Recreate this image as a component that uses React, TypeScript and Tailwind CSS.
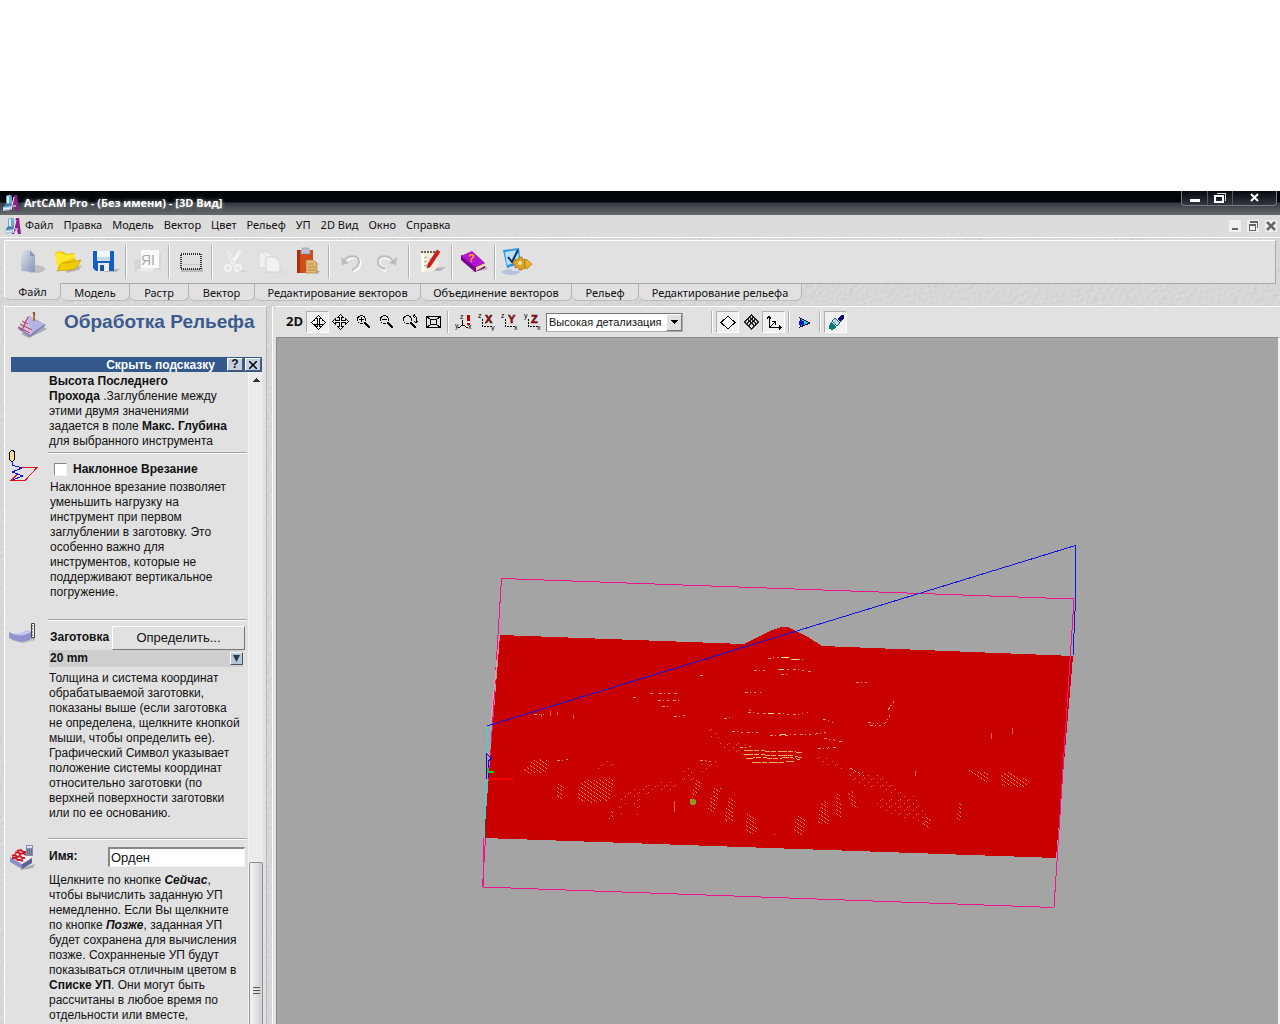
import React, { useState } from "react";

type IconProps = { children: React.ReactNode; w?: number; h?: number; crisp?: boolean };

function Pic({ children, w = 32, h = 32, crisp = false }: IconProps) {
    return (
        <svg width={w} height={h} viewBox={`0 0 ${w} ${h}`} fill="none" className="block shrink-0" shapeRendering={crisp ? "crispEdges" : "auto"} aria-hidden="true">
            {children}
        </svg>
    );
}

// ArtCAM logo
function Logo() {
    return (
        <Pic w={16} h={16}>
            <path d="M1 11l3-4h5l2 6H1z" fill="#3f7fae" />
            <rect x="3" y="0" width="6" height="9" rx="2" fill="#6fa6cf" />
            <rect x="4" y="1" width="2" height="7" fill="#d6eef8" />
            <path d="M0 12l9-1v4l-9 1z" fill="#a9c8df" />
            <path d="M0 14l8-1" stroke="#e8f3fa" />
            <path d="M11 0h3l2 16h-3l-1-4h-2l-1 4H7z" fill="#8d1f8b" />
            <path d="M11 2l-3 13M10 11h3" stroke="#fff" />
        </Pic>
    );
}

// ---------- main toolbar icons ----------
const icons = {
    newFile: (
        <Pic>
            <ellipse cx="20" cy="23" rx="10" ry="4" fill="#a9a9a9" opacity=".6" />
            <path d="M6 4h9l5 5v17l-14-1z" fill="url(#paper)" />
            <path d="M15 4l5 6h-5z" fill="#8d9ab5" />
            <defs>
                <linearGradient id="paper" x1="0" y1="0" x2="1" y2="1">
                    <stop offset="0" stopColor="#dfe5f0" />
                    <stop offset="1" stopColor="#8494b4" />
                </linearGradient>
            </defs>
        </Pic>
    ),
    open: (
        <Pic>
            <path d="M14 25l16-6-3 5-12 3z" fill="#999" opacity=".6" />
            <path d="M3 7l4-2 5 1 2 2 8-1 2 9-18 9z" fill="#e8c500" />
            <path d="M3 8l5-2 5 3 9-1 1 4-14 5-3 8z" fill="#ffe92b" />
            <path d="M5 25c3-2 1-7 6-8 6 0 11-2 18-3-3 4-2 7-7 9-6 2-13 1-17 2z" fill="#f0cc00" stroke="#b58e00" strokeWidth=".6" />
        </Pic>
    ),
    save: (
        <Pic>
            <path d="M18 23h13l-4 3H15z" fill="#999" opacity=".6" />
            <path d="M4 5h21v20H7l-3-3z" fill="#145dc2" />
            <rect x="8" y="5" width="13" height="10" fill="#f4f7fb" />
            <path d="M8 11h13v4H8z" fill="#cbd8e7" />
            <rect x="9" y="17" width="11" height="8" fill="#e8eef4" />
            <rect x="11" y="19" width="4" height="6" fill="#1a4e9b" />
        </Pic>
    ),
    text: (
        <Pic>
            <path d="M3 26l-1-11 3-2 5 1 2-7h17v17H12z" fill="#d6d6d6" />
            <rect x="9" y="4" width="18" height="18" fill="#fafafa" />
            <text x="9" y="19" fontSize="14" fill="#aaa" fontFamily="Liberation Sans">ЯI</text>
            <path d="M3 25l7-3h13l-4 4z" fill="#ececec" />
        </Pic>
    ),
    rect: (
        <Pic crisp>
            <rect x="6" y="22" width="22" height="4" fill="#bbb" />
            <rect x="6" y="8" width="20" height="15" fill="#e0e0e0" stroke="#333" strokeWidth="2" strokeDasharray="1 1" />
            <path d="M8 18h17" stroke="#c7c7c7" />
        </Pic>
    ),
    cut: (
        <Pic>
            <path d="M10 5l6 13M22 5l-8 13" stroke="#f5f5f5" strokeWidth="3" />
            <path d="M10 5l6 13" stroke="#d6d6d6" />
            <circle cx="10" cy="22" r="3" stroke="#f4f4f4" strokeWidth="2" />
            <circle cx="20" cy="22" r="3" stroke="#f4f4f4" strokeWidth="2" />
            <path d="M21 25h7" stroke="#cfcfcf" />
        </Pic>
    ),
    copy: (
        <Pic>
            <path d="M4 6h9l4 4v12H4z" fill="#eee" stroke="#d8d8d8" />
            <path d="M11 11h9l5 4v11H11z" fill="#f1f1f1" stroke="#d3d3d3" />
            <path d="M26 26h3" stroke="#c9c9c9" />
        </Pic>
    ),
    paste: (
        <Pic>
            <path d="M5 4h16v23H5z" fill="#d34a1b" />
            <path d="M5 4h3v23H5z" fill="#a9300d" />
            <path d="M9 5l2-3h5l2 3v3H9z" fill="#b9c4d4" stroke="#7c889b" strokeWidth=".6" />
            <path d="M14 14h7l4 3v10H14z" fill="#e3b877" stroke="#a8783a" strokeWidth=".7" />
            <path d="M16 18h6M16 21h8M16 24h8" stroke="#b88745" />
            <path d="M25 25h3l-3 3z" fill="#999" />
        </Pic>
    ),
    undo: (
        <Pic>
            <path d="M10 16c5-7 15-6 15 1 0 4-3 7-7 8" stroke="#fbfbfb" strokeWidth="3" />
            <path d="M9 15c5-7 15-6 15 1 0 4-3 6-7 8" stroke="#bcbcbc" strokeWidth="2" />
            <path d="M6 11l1 8 7-2z" fill="#bcbcbc" />
        </Pic>
    ),
    redo: (
        <Pic>
            <path d="M21 16c-5-7-14-6-14 1 0 4 3 6 7 8" stroke="#fbfbfb" strokeWidth="3" />
            <path d="M21 15c-5-7-15-6-15 1 0 4 3 6 7 7" stroke="#bcbcbc" strokeWidth="2" />
            <path d="M25 11l-1 8-7-2z" fill="#bcbcbc" />
        </Pic>
    ),
    notes: (
        <Pic>
            <path d="M18 22l13-1-6 4H16z" fill="#888" opacity=".5" />
            <path d="M6 7h16l1 13-4 5-13 1z" fill="#f3eedc" />
            <path d="M6 7h3l2 17-4 2z" fill="#fffdf2" />
            <path d="M6 6h16" stroke="#665" strokeWidth="2" strokeDasharray="2 1" />
            <path d="M9 12l3-1M9 16l3-1M9 20l3-1M14 13h4" stroke="#a98" />
            <path d="M22 4l3 2-10 15-3 1 1-4z" fill="#d81818" stroke="#8d0e0e" strokeWidth=".5" />
        </Pic>
    ),
    book: (
        <Pic>
            <path d="M13 26l15-2 2-2-4-3z" fill="#999" opacity=".5" />
            <path d="M3 9v5l14 12 10-4v-5z" fill="#7a0090" />
            <path d="M18 21l9-4v3l-9 5z" fill="#e9d5a0" />
            <path d="M3 10l11-5 13 12-10 4z" fill="#b316cf" />
            <text x="10" y="16" fontSize="11" fontWeight="bold" fill="#ffb300" fontFamily="Liberation Sans">?</text>
        </Pic>
    ),
    gear: (
        <Pic>
            <ellipse cx="10" cy="26" rx="9" ry="3" fill="#b9c3df" />
            <path d="M2 4l16-2 2 18-14 2z" fill="#2b93e5" />
            <path d="M4 6l13-2 1 12-12 3z" fill="#b7e1fb" />
            <path d="M7 11l4 5 6-12" stroke="#10305c" strokeWidth="2" />
            <path d="M8 21l4 4 5 0-1-6z" fill="#d9def0" />
            <path d="M14 13l3 1 1-3h3l1 3 2-1v10l-2-1-1 2h-3l-1-3-3 1v-3l-2-1v-2l2-1z" fill="#dba320" stroke="#9c6b08" strokeWidth=".6" />
            <circle cx="19" cy="17" r="2" fill="#f5e2b0" />
            <path d="M25 13l6 5-5 5-2-2v-6z" fill="#e8b12c" stroke="#9c6b08" strokeWidth=".6" />
        </Pic>
    ),
};

const toolGroups: { label: string; icon: React.ReactNode }[][] = [
    [
        { label: "Новый", icon: icons.newFile },
        { label: "Открыть", icon: icons.open },
        { label: "Сохранить", icon: icons.save },
    ],
    [{ label: "Примечания", icon: icons.text }],
    [{ label: "Размер", icon: icons.rect }],
    [
        { label: "Вырезать", icon: icons.cut },
        { label: "Копировать", icon: icons.copy },
        { label: "Вставить", icon: icons.paste },
    ],
    [
        { label: "Отменить", icon: icons.undo },
        { label: "Повторить", icon: icons.redo },
    ],
    [{ label: "Заметки", icon: icons.notes }],
    [{ label: "Справка", icon: icons.book }],
    [{ label: "Настройка", icon: icons.gear }],
];

const menus = ["Файл", "Правка", "Модель", "Вектор", "Цвет", "Рельеф", "УП", "2D Вид", "Окно", "Справка"];

const tabs = [
    { name: "Файл", width: "w-[57px]" },
    { name: "Модель", width: "w-[69px]" },
    { name: "Растр", width: "w-[59px]" },
    { name: "Вектор", width: "w-[66px]" },
    { name: "Редактирование векторов", width: "w-[166px]" },
    { name: "Объединение векторов", width: "w-[151px]" },
    { name: "Рельеф", width: "w-[67px]" },
    { name: "Редактирование рельефа", width: "w-[163px]" },
];

function Separator() {
    return <span className="mx-[2px] w-[2px] self-stretch border-l border-r border-l-[#b0b0b0] border-r-white" />;
}

// Grainy grey surface behind the panels
function Texture() {
    return (
        <svg className="absolute inset-0 h-full w-full" aria-hidden="true">
            <filter id="grain">
                <feTurbulence type="fractalNoise" baseFrequency="0.25" numOctaves="2" seed="4" />
                <feDiffuseLighting lightingColor="#dcdcdc" surfaceScale="0.6">
                    <feDistantLight azimuth="225" elevation="72" />
                </feDiffuseLighting>
            </filter>
            <rect width="100%" height="100%" filter="url(#grain)" />
        </svg>
    );
}

function TitleBar() {
    return (
        <header className="flex h-6 items-center justify-between bg-linear-to-b from-[#000509] from-45% via-[#343a40] via-50% to-[#666b70] pl-[3px] pr-[3px]">
            <div className="flex items-center gap-[5px]">
                <Logo />
                <h1 className="whitespace-nowrap font-['Open_Sans','Noto_Sans',sans-serif] text-[11px] font-bold text-white [text-shadow:0_0_4px_#aaa]">
                    ArtCAM Pro - (Без имени) - [3D Вид]
                </h1>
            </div>
            <div className="flex h-[15px] self-start rounded-b-[4px] border border-t-0 border-[#777d86] bg-linear-to-b from-[#050a10] to-[#33383e]">
                <button aria-label="Свернуть" className="grid w-[26px] place-items-center border-r border-[#555b63]">
                    <Pic w={12} h={12} crisp><rect x="1" y="7" width="10" height="3" fill="#fff" /></Pic>
                </button>
                <button aria-label="Развернуть" className="grid w-[25px] place-items-center border-r border-[#555b63]">
                    <Pic w={12} h={12} crisp>
                        <path d="M3 1.500h8.500v7" stroke="#ddd" />
                        <rect x="1" y="4" width="8" height="6" stroke="#fff" strokeWidth="2" />
                    </Pic>
                </button>
                <button aria-label="Закрыть" className="grid w-[43px] place-items-center">
                    <Pic w={12} h={12}><path d="M2 2l7 7M9 2L2 9" stroke="#fff" strokeWidth="2" /></Pic>
                </button>
            </div>
        </header>
    );
}

function MenuBar() {
    return (
        <nav className="flex h-[23px] items-center border-b border-white bg-[#dcdcdc] pb-px pl-[5px] pr-[3px]">
            <Logo />
            <ul className="ml-1 flex grow gap-[10px]">
                {menus.map((m) => (
                    <li key={m}><button className="block whitespace-nowrap">{m}</button></li>
                ))}
            </ul>
            <div className="flex gap-[6px]">
                <button aria-label="Свернуть документ" className="grid size-3 place-items-center bg-[#efefef]">
                    <Pic w={12} h={12} crisp><rect x="3" y="8" width="6" height="2" fill="#666" /></Pic>
                </button>
                <button aria-label="Восстановить документ" className="grid size-3 place-items-center bg-[#efefef]">
                    <Pic w={12} h={12} crisp>
                        <path d="M3.500 2h7v6M2.500 5h6v5h-6z" stroke="#666" strokeWidth="1" />
                        <path d="M3 2h8M2 5h7" stroke="#666" strokeWidth="2" />
                    </Pic>
                </button>
                <button aria-label="Закрыть документ" className="grid size-3 place-items-center bg-[#efefef]">
                    <Pic w={12} h={12}><path d="M2 2l8 8M10 2l-8 8" stroke="#666" strokeWidth="2.500" /></Pic>
                </button>
            </div>
        </nav>
    );
}

function Ribbon() {
    const [active, setActive] = useState("Файл");
    return (
        <section className="relative px-1 pt-[2px] pb-[5px]">
            <div className="flex h-[44px] border border-t-white border-l-white border-r-[#a8a8a8] border-b-[#a8a8a8] bg-[#e1e1e1] py-1 pl-[7px]">
                {toolGroups.map((group, i) => (
                    <React.Fragment key={i}>
                        {i > 0 && <Separator />}
                        {group.map((t) => (
                            <button key={t.label} title={t.label} className="grid w-[37px] place-items-center">{t.icon}</button>
                        ))}
                    </React.Fragment>
                ))}
            </div>
            <div className="flex" role="tablist">
                {tabs.map((t) => (
                    <button
                        key={t.name}
                        role="tab"
                        aria-selected={active === t.name}
                        onClick={() => setActive(t.name)}
                        className={`${t.width} h-[17px] whitespace-nowrap rounded-b-[6px] border-r border-b border-r-[#b4b4b4] border-b-[#bcbcbc] bg-[#e1e1e1] leading-[17px] ${active === t.name ? "relative -mt-px border-l border-l-white" : ""}`}
                    >
                        {t.name}
                    </button>
                ))}
            </div>
        </section>
    );
}

// ---------- left panel ----------
const Rule = () => <hr className="border-0 border-t border-b border-t-[#a4a4a4] border-b-white" />;

function Assistant() {
    const [ramp, setRamp] = useState(false);
    const [name, setName] = useState("Орден");
    return (
        <aside className="relative flex w-[263px] shrink-0 flex-col border-t border-r border-l border-t-white border-r-[#b9b5bd] border-l-white bg-[#e1e1e1] font-['Liberation_Sans',Arial,sans-serif] text-[12px] leading-[15px] text-[#111]">
            <div className="flex h-[50px] shrink-0 items-start pt-[3px] pl-[10px]">
                <Pic w={34} h={30}>
                    <path d="M6 24l8 4 18-9-6-4z" fill="#aaa" />
                    <path d="M3 19l11-13 17 9-16 12z" fill="#7f82b8" />
                    <path d="M3 17l11-10 6 1-4 9 4 3-5 5z" fill="#d3c3de" />
                    <path d="M13 9c5-2 8 2 17 5l-13 9c1-5-4-6-4-14z" fill="#b3b6e2" />
                    <path d="M3 17l12 6M5 14l12 6M7 11l6 3M13 7L7 20" stroke="#b5305f" />
                    <path d="M19 2v9" stroke="#a5733c" strokeWidth="2" />
                    <path d="M18 2l2 3" stroke="#5e3f1e" />
                </Pic>
                <h2 className="ml-[15px] whitespace-nowrap text-[19px] leading-6 font-bold text-[#3b5a8d]">Обработка Рельефа</h2>
            </div>
            <div className="mr-1 ml-[6px] flex h-[15px] shrink-0 items-center justify-end gap-[2px] bg-[#33588c] pr-[1px] font-bold">
                <button className="mr-[10px] pt-px text-white">Скрыть подсказку</button>
                <button aria-label="Помощь" className="h-[13px] w-4 border border-t-white border-l-white border-r-[#556] border-b-[#556] bg-[#c2cfe2] leading-[11px]">?</button>
                <button aria-label="Закрыть панель" className="grid h-[13px] w-4 place-items-center border border-t-white border-l-white border-r-[#556] border-b-[#556] bg-[#c2cfe2]">
                    <Pic w={8} h={8}><path d="M0 0l8 8M8 0L0 8" stroke="#000" strokeWidth="1.500" /></Pic>
                </button>
            </div>
            <div className="flex min-h-0 grow overflow-hidden">
                <div className="w-[242px] whitespace-nowrap">
                    <div className="mt-[2px] pl-[44px]">
                        <p>
                            <b>Высота Последнего<br />Прохода</b> .Заглубление между<br />
                            этими двумя значениями<br />
                            задается в поле <b>Макс. Глубина</b><br />
                            для выбранного инструмента
                        </p>
                    </div>
                    <div className="flex">
                        <div className="w-[43px] pl-[3px]">
                            <Pic w={34} h={36} crisp>
                                <path d="M1.500 3.500l2-2h2l1 2v7l-2 2h-1l-2-2z" fill="#f0e090" stroke="#000" />
                                <path d="M4 13v3l10 3-10 4 11 4-11 4" stroke="#1616d8" />
                                <path d="M14 18.500h15L17 31.500H3l6-6" stroke="#e01020" />
                            </Pic>
                        </div>
                        <div className="grow pt-[3px]">
                            <Rule />
                            <label className="flex h-[26px] items-center gap-[6px] pt-1 pl-[6px] font-bold">
                                <input
                                    type="checkbox"
                                    checked={ramp}
                                    onChange={(e) => setRamp(e.target.checked)}
                                    className="size-[13px] appearance-none border border-t-[#888] border-l-[#888] border-r-[#f4f4f4] border-b-[#f4f4f4] bg-white checked:bg-[#33588c]"
                                />
                                Наклонное Врезание
                            </label>
                            <p className="pl-[2px]">
                                Наклонное врезание позволяет<br />
                                уменьшить нагрузку на<br />
                                инструмент при первом<br />
                                заглублении в заготовку. Это<br />
                                особенно важно для<br />
                                инструментов, которые не<br />
                                поддерживают вертикальное<br />
                                погружение.
                            </p>
                        </div>
                    </div>
                    <div className="mt-[19px] flex">
                        <div className="w-[43px] pt-[3px] pl-[3px]">
                            <Pic w={30} h={24}>
                                <path d="M3 18l12 3 12-3v-3H5z" fill="#aaa" opacity=".7" />
                                <path d="M1 10c7 4 12 2 18-1l5 1v6c-5 4-12 5-18 2l-5-2z" fill="#8e92cf" />
                                <path d="M1 10c7 3 12 1 18-2l4 2c-6 4-15 5-22 0z" fill="#c3c6ee" />
                                <path d="M23.500 1.500h3v14h-3z" fill="#f5f5f5" stroke="#444" />
                                <path d="M23 4h2M23 7h2M23 10h2M23 13h2" stroke="#333" />
                            </Pic>
                        </div>
                        <div className="grow">
                            <Rule />
                            <div className="flex h-[29px] items-center justify-between pt-1 pl-[2px] pr-[2px]">
                                <span className="font-bold">Заготовка</span>
                                <button className="h-6 w-[133px] border border-t-white border-l-white border-r-[#777] border-b-[#777] bg-[#e1e1e1] text-[13px]">Определить...</button>
                            </div>
                            <div className="mr-1 ml-px flex h-[17px] items-center justify-between bg-[#cfcfcf] pl-px font-bold">
                                20 mm
                                <button aria-label="Показать размеры" className="grid size-[13px] place-items-center border border-t-white border-l-white border-r-[#456] border-b-[#456] bg-[#b9c7d8]">
                                    <Pic w={9} h={9}><path d="M1 1h7L4.500 8z" fill="#24384f" /></Pic>
                                </button>
                            </div>
                            <p className="pt-1 pl-px">
                                Толщина и система координат<br />
                                обрабатываемой заготовки,<br />
                                показаны выше (если заготовка<br />
                                не определена, щелкните кнопкой<br />
                                мыши, чтобы определить ее).<br />
                                Графический Символ указывает<br />
                                положение системы координат<br />
                                относительно заготовки (по<br />
                                верхней поверхности заготовки<br />
                                или по ее основанию.
                            </p>
                        </div>
                    </div>
                    <div className="mt-[17px] flex">
                        <div className="w-[43px] pt-[5px] pl-[3px]">
                            <Pic w={30} h={28}>
                                <path d="M12 26l15-5-2 4-12 2z" fill="#999" opacity=".7" />
                                <path d="M2 14l12 7 10-6v5l-10 6z" fill="#5d618f" />
                                <path d="M2 14l12 7v5L2 19z" fill="#8a90ca" />
                                <path d="M2 14l12-8 10 8-10 7z" fill="#f1eef2" />
                                <path d="M4 13l3-1 2 2 3-1 2 2 3 0M7 10l3-1 2 2 3-1 3 2M9 8l4-1 2 2 3 0M4 15l3 0 3 2 3 0 2 1" stroke="#d0182b" strokeWidth="2" />
                                <path d="M18 2h7v11h-7z" fill="#8490ac" />
                                <path d="M19 3h5v2h-5z" fill="#dfe6f2" />
                                <path d="M19 7h5M19 9h5M19 11h5" stroke="#44506b" strokeDasharray="1 1" />
                            </Pic>
                        </div>
                        <div className="grow">
                            <Rule />
                            <div className="flex h-[33px] items-center justify-between pl-px pr-[2px]">
                                <label htmlFor="tp-name" className="font-bold">Имя:</label>
                                <input
                                    id="tp-name"
                                    value={name}
                                    onChange={(e) => setName(e.target.value)}
                                    className="h-5 w-[137px] border-t-2 border-r border-b border-l-2 border-t-[#888] border-r-[#f2f2f2] border-b-[#f2f2f2] border-l-[#888] bg-white px-px text-[13px]"
                                />
                            </div>
                            <p className="pl-px">
                                Щелкните по кнопке <b><i>Сейчас</i></b>,<br />
                                чтобы вычислить заданную УП<br />
                                немедленно. Если Вы щелкните<br />
                                по кнопке <b><i>Позже</i></b>, заданная УП<br />
                                будет сохранена для вычисления<br />
                                позже. Сохранненые УП будут<br />
                                показываться отличным цветом в<br />
                                <b>Списке УП</b>. Они могут быть<br />
                                рассчитаны в любое время по<br />
                                отдельности или вместе,
                            </p>
                        </div>
                    </div>
                </div>
                {/* scroll bar */}
                <div className="ml-px flex w-[15px] flex-col border-l border-[#f6f6f6] bg-[#ececec]">
                    <button aria-label="Прокрутить вверх" className="grid h-4 place-items-center">
                        <Pic w={7} h={4} crisp><path d="M0 4l3-4 4 4z" fill="#333" /></Pic>
                    </button>
                    <div className="mt-auto grid h-[162px] place-items-center rounded-t-[2px] border border-b-0 border-[#8f9097] bg-linear-to-r from-[#f4f4f4] to-[#cfcfd3] pt-[95px]">
                        <Pic w={7} h={10} crisp><path d="M0 1h7M0 4h7M0 7h7M0 10h7" stroke="#555" /></Pic>
                    </div>
                </div>
            </div>
        </aside>
    );
}

// ---------- 3D view toolbar ----------
const lens = <><circle cx="6.500" cy="6.500" r="4" stroke="#000" /><path d="M10 10l5 5" stroke="#000" strokeWidth="2" /></>;
const axes = <path d="M4.500 6v7.500H14" stroke="#000" strokeDasharray="2 1" />;

// Axis names around the small coordinate cross, the view direction in red
function AxisIcon({ top, right, dir }: { top: string; right: string; dir: string }) {
    return (
        <>
            {axes}
            <text x="0" y="5" fontSize="7" fill="#000" fontFamily="Liberation Sans">{top}</text>
            <text x="13" y="17" fontSize="7" fill="#000" fontFamily="Liberation Sans">{right}</text>
            <text x="7" y="10" fontSize="11" fontWeight="bold" fill="#c01020" stroke="#300" strokeWidth=".5" fontFamily="Liberation Sans">{dir}</text>
        </>
    );
}

const viewIcons = {
    spin: (
        <>
            <path d="M9.500 2.500l3 3h-2v8h2l-3 3-3-3h2v-8h-2z" stroke="#000" fill="#fff" />
            <path d="M6 6.500L2.500 9.500 6 12.500V11h7v1.500l3.500-3L13 6.500" stroke="#000" />
        </>
    ),
    pan: <path d="M8.500 1.500l3 3h-2v3h4v-2l3 3-3 3v-2h-4v4h2l-3 3-3-3h2v-4h-4v2l-3-3 3-3v2h4v-3h-2z" stroke="#000" fill="#eee" />,
    zoomIn: <>{lens}<path d="M4 6.500h5M6.500 4v5" stroke="#000" /></>,
    zoomOut: <>{lens}<path d="M4 6.500h5" stroke="#000" /></>,
    zoomPrev: <>{lens}<path d="M12 2.500c4 0 4 4 3 7M14 1l-2 2 2 2M13 8l2 2 2-2" stroke="#000" /></>,
    fit: <path d="M2.500 3.500h14v11h-14zM6.500 6.500h6v5h-6zM3 4l3 2M16 4l-3 2M3 14l3-2M16 14l-3-2" stroke="#000" />,
    iso: (
        <>
            <path d="M7.500 7v5M8 12l-5 3M8 12l5 3" stroke="#000" />
            <text x="5" y="6" fontSize="7" fill="#000" fontFamily="Liberation Sans">z</text>
            <text x="0" y="15" fontSize="7" fill="#000" fontFamily="Liberation Sans">y</text>
            <text x="13" y="16" fontSize="7" fill="#000" fontFamily="Liberation Sans">x</text>
            <path d="M13 2v6M13 10v2" stroke="#b00" strokeWidth="3" />
        </>
    ),
    alongX: <AxisIcon top="z" right="y" dir="X" />,
    alongY: <AxisIcon top="z" right="x" dir="Y" />,
    alongZ: <AxisIcon top="y" right="x" dir="Z" />,
    plane: <path d="M9 3l7 6.500L9 16 2 9.500z" stroke="#000" fill="#fff" />,
    mesh: <path d="M9.500 2l7 7-7 7-7-7zM7.500 4l7 7M5.500 6l7 7M11.500 4l-7 7M13.500 6l-7 7" stroke="#222" />,
    origin: <path d="M4.500 3v11.500H16M2 5.500l2-2 2 2M14 12.500l2 2-2 2M5 14l5-5M7 8.500h3v3" stroke="#000" />,
    light: <><path d="M4 5l10 5-10 4 2-4z" fill="#16d8e8" stroke="#113" /><rect x="3" y="8" width="5" height="4" fill="#1018c8" /></>,
    brush: <><path d="M11 6l3-4h3v4l-4 3z" fill="#101080" /><path d="M8 5l5 5-3 3-5-5z" fill="#b5dde0" stroke="#267" /><path d="M4 9l6 5c-2 3-5 3-8 2 0-3 0-5 2-7z" fill="#0b7a72" /></>,
};

function ViewButton({ label, icon, pressed = false }: { label: string; icon: React.ReactNode; pressed?: boolean }) {
    return (
        <button
            title={label}
            aria-pressed={pressed}
            className={`grid h-[22px] w-[23px] place-items-center border ${pressed ? "border-t-[#b0b0b0] border-l-[#b0b0b0] border-r-white border-b-white bg-[#f0f0f0]" : "border-transparent"}`}
        >
            <Pic w={18} h={18} crisp>{icon}</Pic>
        </button>
    );
}

function ViewToolbar() {
    return (
        <div className="flex h-[31px] items-center border-t border-white pl-[7px]">
            <button className="w-[23px] text-center font-['Open_Sans','Noto_Sans',sans-serif] text-[13px] font-bold">2D</button>
            <ViewButton label="Вращать" icon={viewIcons.spin} pressed />
            <ViewButton label="Сдвиг" icon={viewIcons.pan} />
            <ViewButton label="Увеличить" icon={viewIcons.zoomIn} />
            <ViewButton label="Уменьшить" icon={viewIcons.zoomOut} />
            <ViewButton label="Предыдущий вид" icon={viewIcons.zoomPrev} />
            <ViewButton label="Показать все" icon={viewIcons.fit} />
            <div className="flex h-[22px] px-px"><Separator /></div>
            <ViewButton label="Изометрия" icon={viewIcons.iso} />
            <ViewButton label="Вид по X" icon={viewIcons.alongX} />
            <ViewButton label="Вид по Y" icon={viewIcons.alongY} />
            <ViewButton label="Вид по Z" icon={viewIcons.alongZ} />
            <div className="relative ml-[2px]">
                <select
                    aria-label="Детализация"
                    className="block h-[19px] w-[137px] appearance-none border border-t-[#777] border-l-[#777] border-r-[#aaa] border-b-[#aaa] bg-white pl-[2px] font-['Liberation_Sans',Arial,sans-serif] text-[11px]"
                >
                    <option>Высокая детализация</option>
                    <option>Низкая детализация</option>
                </select>
                <span className="pointer-events-none absolute top-px right-px grid h-[17px] w-4 place-items-center border border-t-white border-l-white border-r-[#777] border-b-[#777] bg-[#e1e1e1]">
                    <Pic w={8} h={4} crisp><path d="M0 0h8L4 4z" fill="#000" /></Pic>
                </span>
            </div>
            <div className="ml-[25px] flex h-[22px] px-px"><Separator /></div>
            <ViewButton label="Плоскость" icon={viewIcons.plane} pressed />
            <ViewButton label="Сетка" icon={viewIcons.mesh} />
            <ViewButton label="Начало координат" icon={viewIcons.origin} pressed />
            <div className="flex h-[22px] px-px"><Separator /></div>
            <ViewButton label="Свет" icon={viewIcons.light} />
            <div className="flex h-[22px] px-px"><Separator /></div>
            <ViewButton label="Материал" icon={viewIcons.brush} pressed />
        </div>
    );
}

// Areas where the toolpath shows through as a dotted grain
const denseAreas = [
    "M522 771l12-12 14 1 2 5-5 8-20 1z",
    "M577 800l4-19 28-3 4 2-2 20-20 3z",
    "M555 797l3-14 6 2-2 14z",
    "M707 811l8-24 6 1-6 24z",
    "M724 820l4-22 7 2-2 22z",
    "M745 832l2-18 9 4 1 13-6 4z",
    "M691 798l5-18 7 1-7 16z",
    "M794 833l2-17 10 2-3 18z",
    "M818 824l2-22 8-1 1 23z",
    "M837 818l-2-18 4-9 3 25z",
    "M850 805l-2-15 5 2 5 16z",
    "M968 770l20 2 2 11-9-3z",
    "M1001 773l9-1 19 9-1 6-26-1z",
    "M957 821l1-17 4-2-1 18z",
    "M922 826l5-10 4 4-1 9z",
    "M609 820l1-10 4 1-1 8z",
];

const looseAreas = [
    "M595 766l10-8 10 2-2 6-17 3z",
    "M616 795l38-13 24-3-2 10-39 7-17 4z",
    "M619 802l8-5-3 19-4 2zM634 798l7-1-2 21-4-8z",
    "M680 778l8-12 7 12-10 6z",
    "M702 760l16 3-6 7-12 7z",
    "M848 768l40 10 18 20-26-8-32-9z",
    "M872 800l34-4 20 14 1 12-23-4-16-5-14-8z",
    "M895 800l20-4 12 28-12-8z",
    "M704 728l8-1 8 10-6 3zM718 743l30-2-4 14-20-6z",
    "M808 755l32 6 4 10-4 1z",
    "M773 838l1-10 3 1-1 13z",
];

const contours = [
    "M768 659l6-2 12 0 8 3 10-1",
    "M754 670h14M778 669h12l12 1 10 2",
    "M781 674h6M745 692h16M856 683l12-1",
    "M748 712l14 2 16-1 16 2 14-3M749 709l3 3",
    "M732 731l8 1 20 1M770 735h18l28-1 10-2",
    "M724 719l8-2M823 719l12 4M824 738l20 4",
    "M740 748l14-2M818 749l20-2",
    "M659 693h18M658 700h22M662 706h8M674 717l12-2",
    "M870 726l14-1 6-10M888 710l6-9M868 722l10 2",
    "M534 715l10-1M650 693h3M633 697h3M700 675h3",
    "M557 761l14-2M700 760l16 2M850 768l14 8",
];

const ridges = [
    "M744 751l12-1 18 2 16-1 12 2",
    "M744 755l12-1 18 2 16-1 12 3",
    "M746 759l14-2 14 2 16-2 10 3",
    "M752 763l12-1h20l10-1",
];

function Scene() {
    return (
        <svg viewBox="277 338 1001 686" preserveAspectRatio="xMinYMin slice" className="block h-full w-full" shapeRendering="crispEdges" role="img" aria-label="Рельеф">
            <defs>
                <pattern id="dense" width="6" height="4" patternUnits="userSpaceOnUse">
                    <path d="M0 0h1v1H0zM3 2h1v1H3z" fill="#f0b040" />
                    <path d="M2 1h1v1H2zM5 3h1v1H5z" fill="#e8641c" />
                </pattern>
                <pattern id="loose" width="9" height="7" patternUnits="userSpaceOnUse">
                    <path d="M0 1h1v1H0zM4 5h1v1H4zM7 2h1v1H7z" fill="#e8782a" />
                </pattern>
            </defs>
            <path d="M501.500 578.500L1074 599L1054 907.500L482.500 887z" stroke="#f0148c" fill="none" />
            <path d="M500 635L744 644L762 635Q782 624 790 628L808 637L822 646L1073 656L1056 858L484 838z" fill="#c80000" />
            <path d="M1074 599L1054 907M484 838L483 887" stroke="#f0148c" fill="none" />
            <path d="M499 640L491 720" stroke="#ff90a8" fill="none" />
            {denseAreas.map((d) => <path key={d} d={d} fill="url(#dense)" />)}
            {looseAreas.map((d) => <path key={d} d={d} fill="url(#loose)" />)}
            {contours.map((d) => <path key={d} d={d} fill="none" stroke="#f5a35a" strokeDasharray="3 2 1 3 2 4" />)}
            {ridges.map((d) => <path key={d} d={d} fill="none" stroke="#f2b04c" strokeDasharray="9 1 5 2" />)}
            <path d="M781 657h8M792 659h5M780 669h4M768 713h6M780 734h6" stroke="#ffe680" fill="none" />
            <path d="M550 711v5M557 712v3M573 715v4M674 801v11M991 733v6M1012 728v6M915 771v5M541 714v3" stroke="#e06a20" fill="none" />
            <path d="M690 799h5l1 2v3l-2 1h-3l-1-2z" fill="#8f9a1c" />
            <path d="M487 726L1075.500 545.500V600L1073 656" stroke="#1414e0" fill="none" />
            <path d="M487.500 726L484.500 838" stroke="#20e0e8" fill="none" />
            <path d="M486.500 779V754l5 4-3 3v18" stroke="#1800d0" fill="none" />
            <path d="M488 768v4h6" stroke="#10d020" fill="none" strokeWidth="2" />
            <path d="M488 778.500h25" stroke="#ff0000" fill="none" strokeWidth="2" />
        </svg>
    );
}

export default function App() {
    return (
        <div className="flex h-screen flex-col overflow-hidden bg-white pt-[191px] font-['Noto_Sans',sans-serif] text-[11px] text-[#111]">
            <TitleBar />
            <div className="relative flex min-h-0 grow flex-col bg-[#d3d3d3]">
                <Texture />
                <div className="relative"><MenuBar /></div>
                <Ribbon />
                <main className="relative flex min-h-0 grow gap-[5px] pl-1">
                    <Assistant />
                    <section className="flex min-w-0 grow flex-col border-l border-white bg-[#e1e1e1] pl-[3px]">
                        <ViewToolbar />
                        <div className="min-h-0 grow border-t border-r-2 border-l border-t-[#8a8a8a] border-r-[#f2f2f2] border-l-[#8e8e8e] bg-[#a4a4a4]">
                            <Scene />
                        </div>
                    </section>
                </main>
            </div>
        </div>
    );
}
